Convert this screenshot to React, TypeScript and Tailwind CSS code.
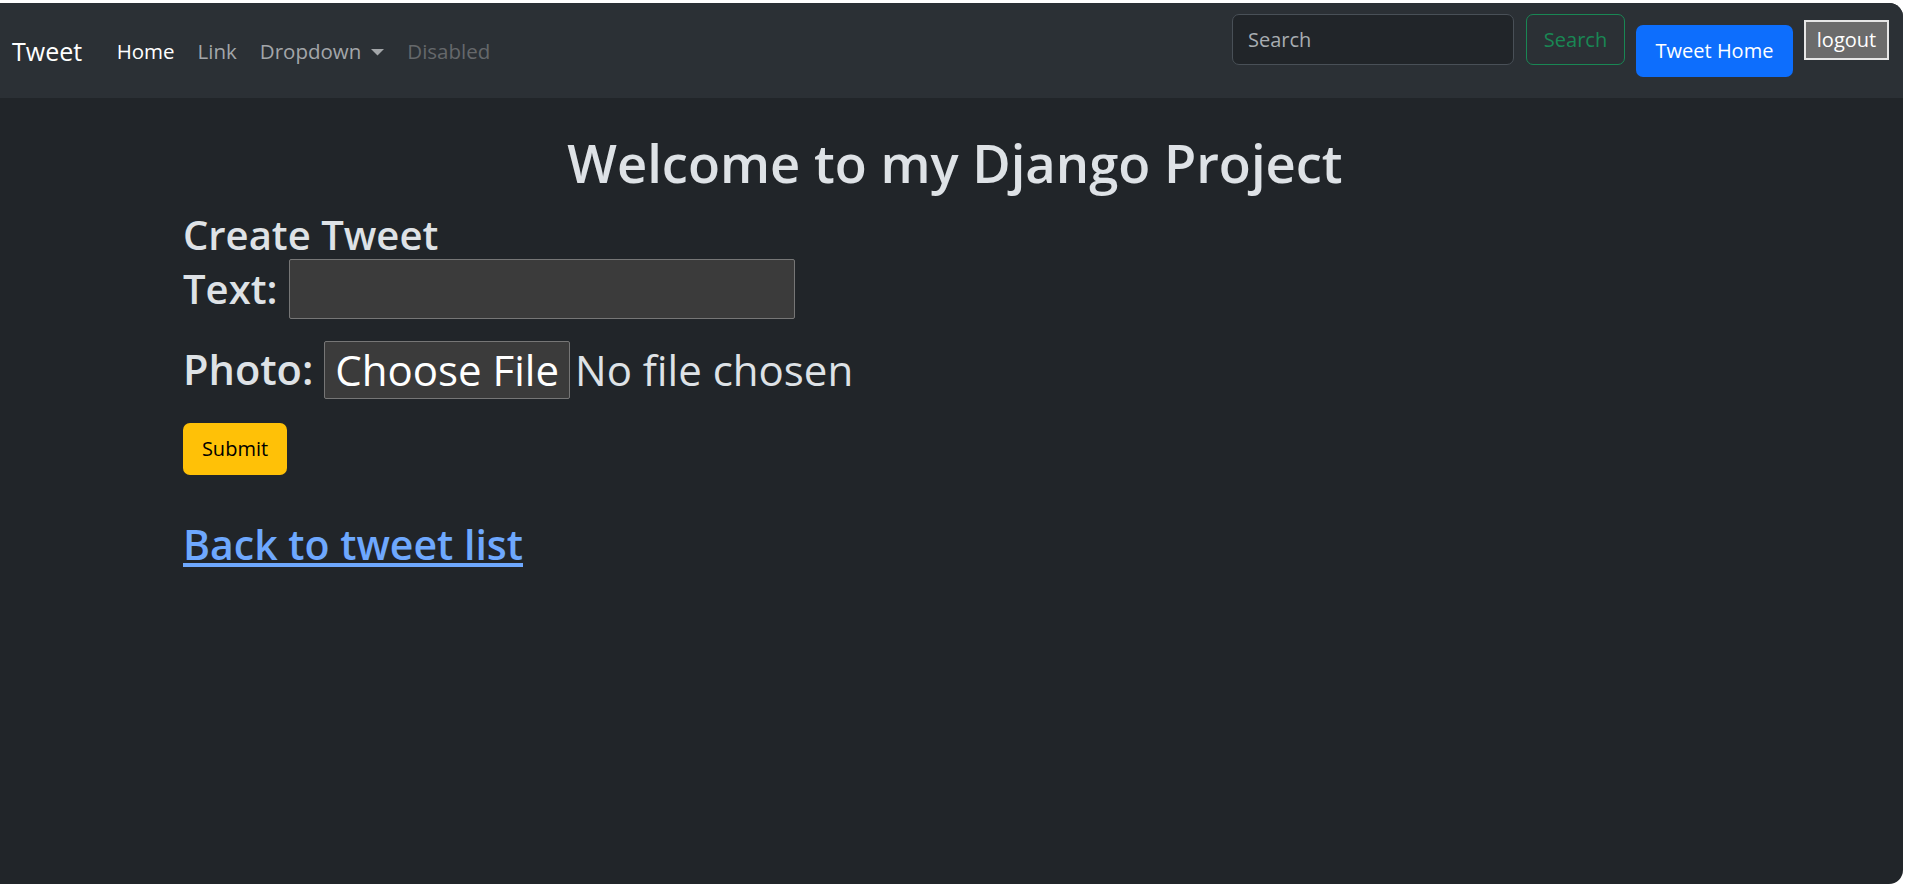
const NAV_LINKS = [
  { label: 'Home', className: 'text-white' },
  { label: 'Link', className: 'text-[#a3a6a9]' },
  { label: 'Dropdown', className: 'text-[#a3a6a9]', caret: true },
  { label: 'Disabled', className: 'text-[#65686b]' },
];

function Caret() {
  return (
    <svg width="13" height="7" viewBox="0 0 13 7" className="ml-[10px] mt-[2px]">
      <path d="M0 0 L13 0 L6.5 6.5 Z" fill="currentColor" />
    </svg>
  );
}

export default function App() {
  return (
    <div className="w-full h-[886px] bg-white font-['Open_Sans',sans-serif]">
      <div className="mt-[3px] mr-[6px] h-[881px] rounded-r-[14px] overflow-hidden bg-[#212529] text-[#dee2e6]">
        {/* Navbar */}
        <nav className="flex items-center h-[95px] bg-[#2b3035] pl-[12px] pr-[14px]">
          <span className="text-[25px] text-white mr-[23px] mt-[2px]">Tweet</span>
          <ul className="flex items-center mt-[2px]">
            {NAV_LINKS.map((l) => (
              <li key={l.label} className={`flex items-center px-[11.5px] text-[20.5px] ${l.className}`}>
                {l.label}
                {l.caret && <Caret />}
              </li>
            ))}
          </ul>

          <div className="ml-auto self-stretch flex items-start pt-[11px]">
            <form className="flex items-center gap-[12px]">
              <input
                placeholder="Search"
                className="w-[282px] h-[51px] rounded-[7px] border border-[#495057] bg-[#212529] px-[15px] text-[20px] placeholder:text-[#a8adb2] outline-none"
              />
              <button
                type="button"
                className="w-[99px] h-[51px] rounded-[7px] border border-[#198754] text-[#198754] text-[20px]"
              >
                Search
              </button>
            </form>
            <button
              type="button"
              className="ml-[11px] mt-[11px] w-[157px] h-[52px] rounded-[7px] bg-[#0d6efd] text-white text-[20px]"
            >
              Tweet Home
            </button>
            <button
              type="button"
              className="ml-[11px] mt-[6px] w-[85px] h-[40px] bg-[#6b6b6b] border-2 border-[#e6e6e6] text-white text-[20px]"
            >
              logout
            </button>
          </div>
        </nav>

        {/* Content */}
        <main className="pt-[34px]">
          <h1 className="text-center pl-[7px] text-[52.5px] leading-[62px] font-semibold">Welcome to my Django Project</h1>

          <div className="pl-[183px] mt-[17px]">
            <h2 className="text-[40px] leading-[48px] font-semibold">Create Tweet</h2>
            <form>
              <div className="flex items-center gap-[12px] text-[40px] font-semibold">
                <label>Text:</label>
                <input className="w-[506px] h-[60px] bg-[#3b3b3b] border border-[#767676] rounded-[2px] outline-none" />
              </div>
              <div className="flex items-center mt-[19px] text-[42px]">
                <label className="font-semibold text-[41.5px] mr-[11px]">Photo:</label>
                <span className="flex items-center justify-center h-[58px] px-[10px] bg-[#3b3b3b] border border-[#767676] rounded-[2px] text-white">
                  Choose File
                </span>
                <span className="ml-[5px]">No file chosen</span>
              </div>
              <button
                type="button"
                className="mt-[22px] w-[104px] h-[52px] rounded-[7px] bg-[#ffc107] text-black text-[20px]"
              >
                Submit
              </button>
            </form>
            <a href="#" className="inline-block mt-[45px] text-[41px] leading-[48px] font-semibold text-[#6ea8fe] underline">
              Back to tweet list
            </a>
          </div>
        </main>
      </div>
    </div>
  );
}
